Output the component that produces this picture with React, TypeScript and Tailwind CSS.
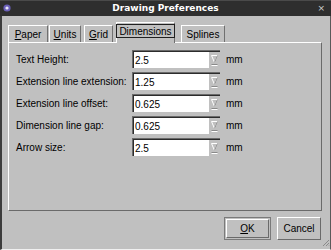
import React from "react";

const font = { fontFamily: '"Liberation Sans", Arial, sans-serif' };

function Field({ value }: { value: string }) {
  return (
    <div className="flex h-[18px] w-[88px] border-t border-l border-[#6a6a6a] border-r-white border-b-white bg-white">
      <div className="flex flex-1 items-center border-t border-l border-[#2c2c2c] pl-[1px] text-[10px] text-black">
        {value}
      </div>
      <div className="flex w-[11px] items-start justify-center border-t border-[#2c2c2c] bg-[#c0c0c0]">
        <svg width="11" height="16" viewBox="0 0 11 16">
          <path d="M2.5 3.5 L8.5 3.5 L5.5 10.5 Z" fill="none" stroke="#ffffff" strokeWidth="1" />
          <path d="M8.5 3.5 L5.5 10.5" fill="none" stroke="#8a8a8a" strokeWidth="1" />
          <path d="M2.5 12.5 L8.5 12.5" stroke="#8a8a8a" strokeWidth="1" />
          <path d="M2.5 13.5 L8.5 13.5" stroke="#ffffff" strokeWidth="1" />
        </svg>
      </div>
    </div>
  );
}

function Row({ label, value }: { label: string; value: string }) {
  return (
    <div className="flex h-[18px] items-center">
      <div className="w-[116px] text-[10px] text-black">{label}</div>
      <Field value={value} />
      <div className="ml-[6px] text-[10px] text-black">mm</div>
    </div>
  );
}

function Tab({
  children,
  w,
  ml,
}: {
  children: React.ReactNode;
  w: string;
  ml: string;
}) {
  return (
    <div
      className={`${w} ${ml} flex h-[17px] items-center justify-center border-t border-l border-white border-r border-r-[#707070] text-[10px] text-black`}
    >
      {children}
    </div>
  );
}

export default function App() {
  return (
    <div className="flex h-[250px] w-[331px] flex-col bg-[#c0c0c0]" style={font}>
      {/* Title bar */}
      <div className="relative flex h-[16px] items-center justify-center bg-[#2e2e2e] border-t border-[#4a4a4a]">
        <div className="absolute left-[3px] top-[3px]">
          <svg width="8" height="8" viewBox="0 0 8 8">
            <circle cx="4" cy="4" r="3.6" fill="#6a5fb8" />
            <circle cx="4" cy="4" r="1.6" fill="#e8e6f7" />
          </svg>
        </div>
        <div
          className="text-[9px] font-bold text-white"
          style={{ fontFamily: '"DejaVu Sans", sans-serif' }}
        >
          Drawing Preferences
        </div>
        <div className="absolute right-[6px] top-[3px] text-[9px] leading-[9px] text-[#d0d0d0]" style={{ fontFamily: '"DejaVu Sans", sans-serif' }}>
          ×
        </div>
      </div>

      {/* Body */}
      <div className="flex flex-1 flex-col border-l-2 border-r border-b border-l-[#3c3c3c] border-r-[#5a5a5a] border-b-[#f0f0f0] pl-[6px] pt-[6px]">
        {/* Tabs */}
        <div className="flex h-[20px] items-end">
          <Tab w="w-[40px]" ml="ml-0">
            <span><span className="underline">P</span>aper</span>
          </Tab>
          <Tab w="w-[32px]" ml="ml-[1px]">
            <span><span className="underline">U</span>nits</span>
          </Tab>
          <Tab w="w-[29px]" ml="ml-[3px]">
            <span><span className="underline">G</span>rid</span>
          </Tab>
          <div className="relative z-10 -mb-px ml-[3px] flex h-[21px] w-[59px] items-start justify-center border-t border-l border-white border-r border-r-[#707070] bg-[#c0c0c0] pt-[1px]">
            <div className="flex h-[14px] items-center border border-[#202020] px-[2px] text-[10px] text-black">
              Dimensions
            </div>
          </div>
          <Tab w="w-[44px]" ml="ml-[6px]">
            Splines
          </Tab>
        </div>

        {/* Panel */}
        <div className="flex h-[169px] w-[314px] flex-col gap-[4px] border-t border-l border-white border-r border-b border-r-[#6a6a6a] border-b-[#6a6a6a] pl-[7px] pt-[7px]">
          <Row label="Text Height:" value="2.5" />
          <Row label="Extension line extension:" value="1.25" />
          <Row label="Extension line offset:" value="0.625" />
          <Row label="Dimension line gap:" value="0.625" />
          <Row label="Arrow size:" value="2.5" />
        </div>

        {/* Buttons */}
        <div className="relative mt-[6px] flex justify-end gap-[6px] pr-[9px]">
          <div className="h-[23px] w-[47px] border border-[#7a7a7a] p-[1px]">
            <div className="flex h-full w-full items-center justify-center border-t border-l border-white border-r border-b border-r-[#6a6a6a] border-b-[#6a6a6a] text-[10px] text-black">
              <span><span className="underline">O</span>K</span>
            </div>
          </div>
          <div className="flex h-[23px] w-[44px] items-center justify-center border-t border-l border-white border-r border-b border-r-[#6a6a6a] border-b-[#6a6a6a] text-[10px] text-black">
            Cancel
          </div>
          <div className="absolute right-0 top-[22px]">
            <svg width="8" height="8" viewBox="0 0 8 8">
              <path d="M7 1 L1 7 M7 4 L4 7 M7 6.5 L6.5 7" stroke="#8a8a8a" strokeWidth="1" />
            </svg>
          </div>
        </div>
      </div>
    </div>
  );
}
